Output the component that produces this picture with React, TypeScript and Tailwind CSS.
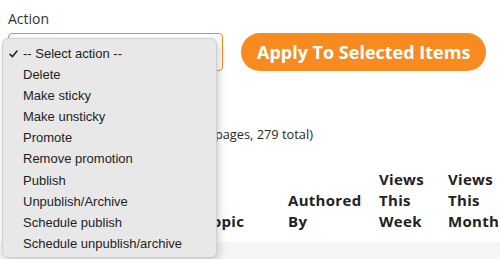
import React from "react";

const items = [
  "-- Select action --",
  "Delete",
  "Make sticky",
  "Make unsticky",
  "Promote",
  "Remove promotion",
  "Publish",
  "Unpublish/Archive",
  "Schedule publish",
  "Schedule unpublish/archive",
];

export default function App() {
  return (
    <div className="relative w-[500px] h-[259px] overflow-hidden bg-white text-[#333] font-['Open_Sans',sans-serif]">
      <div className="pl-2 pt-[9px]">
        <label className="block text-[14px] leading-[20px] text-[#333]">Action</label>
        <div className="mt-[4px] flex items-center gap-[18px]">
          <div className="w-[215px] h-[38px] rounded-[4px] border border-[#f7891f] bg-white" />
          <button className="h-[38px] px-[16px] rounded-full bg-[#f88b1f] text-white font-bold text-[18px] leading-[38px] whitespace-nowrap">
            Apply To Selected Items
          </button>
        </div>
        <p className="mt-[54px] pl-[44px] text-[12.8px] leading-[18px] text-[#2a2a2a] whitespace-nowrap">
          Displaying 1 - 20 of 279 (14 pages, 279 total)
        </p>
      </div>

      <div className="mt-[26px] pl-2 pb-[10px] grid grid-cols-[195px_85px_91px_69px_1fr] items-end font-bold text-[15px] leading-[21px] text-[#222] tracking-[0.3px]">
        <div />
        <div>Topic</div>
        <div>
          Authored
          <br />
          By
        </div>
        <div>
          Views
          <br />
          This
          <br />
          Week
        </div>
        <div>
          Views
          <br />
          This
          <br />
          Month
        </div>
      </div>
      <div className="bg-[#f5f5f5] h-[40px] pl-2 pt-[15px] grid grid-cols-[195px_1fr]">
        <div />
        <div className="text-[#f7891f] font-semibold text-[15px] leading-[21px]">Understanding</div>
      </div>

      <div className="absolute left-[2px] top-[38px] w-[215px] h-[220px] rounded-[6px] border border-[#cfcfcf] bg-[#e8e8e8] shadow-[2px_3px_8px_rgba(0,0,0,0.18)] pt-[4px] font-['Liberation_Sans',Arial,sans-serif] text-[13px] text-[#1e1e1e]">
        {items.map((it, i) => (
          <div key={it} className="relative h-[21.1px] leading-[21px] pl-[20px] whitespace-nowrap">
            {i === 0 && (
              <svg className="absolute left-[6px] top-[7px]" width="9" height="8" viewBox="0 0 9 8">
                <path d="M1 4.2 L3.4 6.8 L8 1" fill="none" stroke="#1e1e1e" strokeWidth="1.5" strokeLinecap="round" strokeLinejoin="round" />
              </svg>
            )}
            {it}
          </div>
        ))}
      </div>
    </div>
  );
}
